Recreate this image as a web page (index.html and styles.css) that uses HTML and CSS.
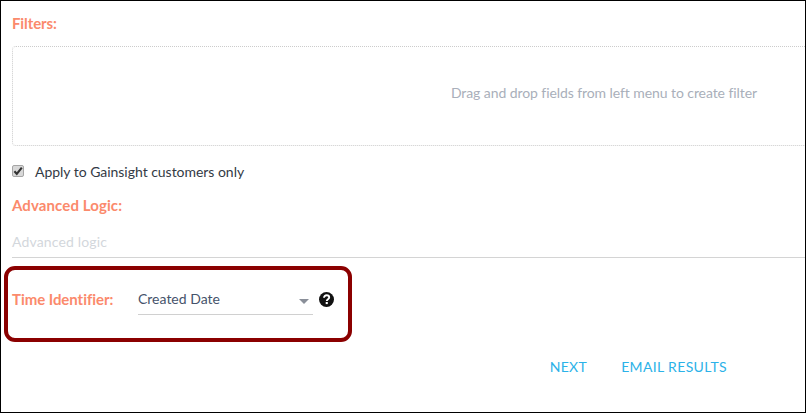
FILE: index.html
```html
<!DOCTYPE html>
<html lang="en">
<head>
    <meta charset="UTF-8">
    <meta name="viewport" content="width=device-width, initial-scale=1.0">
    <title>Report Filters</title>
    <link rel="stylesheet" href="styles.css">
</head>
<body>
    <main class="frame">
        <h2 class="section-label filters-label">Filters:</h2>
        <div class="drop-zone">
            <p class="drop-hint">Drag and drop fields from left menu to create filter</p>
        </div>

        <label class="check-row">
            <span class="check-box">
                <svg width="10" height="10" viewBox="0 0 10 10"><path d="M1.4 5.2 L3.8 7.8 L8.8 1.6" fill="none" stroke="#333" stroke-width="2.1"/></svg>
            </span>
            Apply to Gainsight customers only
        </label>

        <h2 class="section-label logic-label">Advanced Logic:</h2>
        <div class="logic-input">Advanced logic</div>

        <!-- highlighted row -->
        <div class="time-box">
            <span class="time-label">Time Identifier:</span>
            <div class="time-select">
                <span>Created Date</span>
                <span class="select-arrow"></span>
            </div>
            <svg class="help-icon" width="15" height="15" viewBox="0 0 15 15">
                <circle cx="7.5" cy="7.5" r="7.5" fill="#111"/>
                <path d="M5 5.8 C5 4.2 6.2 3.3 7.6 3.3 C9.1 3.3 10.2 4.2 10.2 5.5 C10.2 7.3 7.8 7.3 7.8 9" fill="none" stroke="#fff" stroke-width="1.9"/>
                <rect x="6.7" y="10" width="2.1" height="2.1" fill="#fff"/>
            </svg>
        </div>

        <div class="actions">
            <a class="action-link" href="#">NEXT</a>
            <a class="action-link" href="#">EMAIL RESULTS</a>
        </div>
    </main>
</body>
</html>
```

FILE: styles.css
```css
html, body {
    margin: 0;
    padding: 0;
    background-color: #fff;
}
body {
    font-family: Lato, "Open Sans", sans-serif;
    font-size: 14px;
    color: #3c4656;
}
.frame {
    box-sizing: border-box;
    width: 806px;
    height: 413px;
    border: 1px solid #000;
    overflow: hidden;
    background-color: #fff;
}
.section-label {
    margin: 0;
    font-size: 15px;
    line-height: 18px;
    font-weight: 700;
    color: #fb8a6c;
}
.filters-label {
    margin: 13px 0 0 11px;
    letter-spacing: -0.1px;
}
.drop-zone {
    display: flex;
    justify-content: flex-end;
    align-items: center;
    box-sizing: border-box;
    height: 100px;
    margin: 14px -6px 0 11px;
    padding: 0 53px 8px 0;
    border: 1px dotted #ccc;
    border-radius: 4px;
}
.drop-hint {
    margin: 0;
    color: #a9afba;
    font-size: 14px;
    letter-spacing: -0.08px;
}
.check-row {
    display: flex;
    align-items: center;
    gap: 11px;
    height: 18px;
    margin: 16px 0 0 11px;
    color: #333a45;
    letter-spacing: -0.03px;
}
.check-box {
    display: flex;
    align-items: center;
    justify-content: center;
    box-sizing: border-box;
    width: 12px;
    height: 12px;
    background-color: #d8d8d8;
    border: 1px solid #a6a6a6;
    border-radius: 2px;
}
.logic-label {
    margin: 16px 0 0 11px;
    letter-spacing: 0.1px;
}
.logic-input {
    box-sizing: border-box;
    height: 33px;
    margin: 11px 0 0 11px;
    padding-top: 8px;
    border-bottom: 1px solid #d4d4d4;
    color: #d3d7dc;
    line-height: 18px;
    letter-spacing: 0.15px;
}
.time-box {
    display: flex;
    align-items: center;
    box-sizing: border-box;
    width: 348px;
    height: 76px;
    margin: 8px 0 0 3px;
    padding: 0 0 8px 4px;
    border: 4px solid #8b0000;
    border-radius: 11px;
}
.time-label {
    width: 126px;
    margin-bottom: 2px;
    font-size: 15px;
    font-weight: 700;
    letter-spacing: -0.05px;
    color: #fb8a6c;
}
.time-select {
    display: flex;
    align-items: center;
    justify-content: space-between;
    box-sizing: border-box;
    width: 175px;
    height: 30px;
    padding: 0 4px 2px 0;
    border-bottom: 1px solid #d0d0d0;
    color: #46536b;
}
.select-arrow {
    width: 0;
    height: 0;
    border-left: 5px solid transparent;
    border-right: 5px solid transparent;
    border-top: 5px solid #8a8f99;
    margin-top: 5px;
}
.help-icon {
    margin: 0 0 1px 6px;
}
.actions {
    display: flex;
    justify-content: flex-end;
    gap: 34px;
    margin: 16px 78px 0 0;
}
.action-link {
    color: #2cb2e8;
    font-size: 14px;
    line-height: 18px;
    letter-spacing: 0.35px;
    text-decoration: none;
}
```
